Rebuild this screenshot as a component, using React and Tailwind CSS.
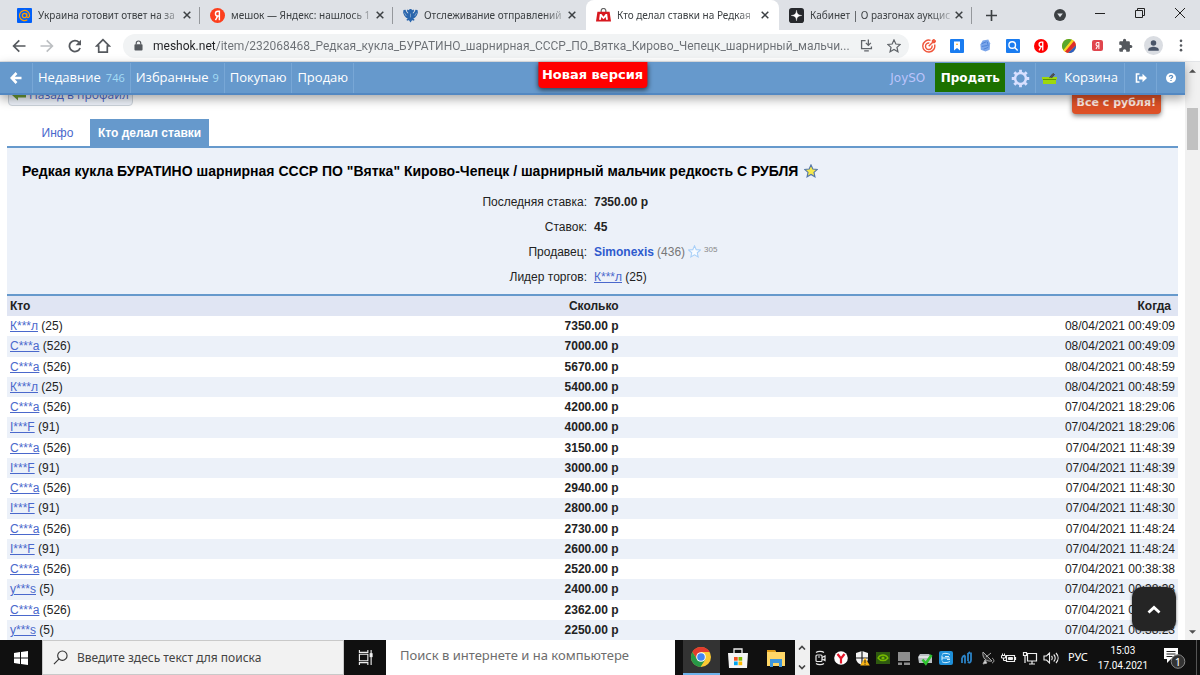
import { useState } from "react";

const tabs = [
  { icon: "mail", title: "Украина готовит ответ на за" },
  { icon: "yandex", title: "мешок — Яндекс: нашлось 1" },
  { icon: "post", title: "Отслеживание отправлений" },
  { icon: "meshok", title: "Кто делал ставки на Редкая", active: true },
  { icon: "cabinet", title: "Кабинет | О разгонах аукцис" },
];

const bids = [
  { who: "К***л", rating: 25, sum: "7350.00 р", date: "08/04/2021 00:49:09" },
  { who: "С***а", rating: 526, sum: "7000.00 р", date: "08/04/2021 00:49:09" },
  { who: "С***а", rating: 526, sum: "5670.00 р", date: "08/04/2021 00:48:59" },
  { who: "К***л", rating: 25, sum: "5400.00 р", date: "08/04/2021 00:48:59" },
  { who: "С***а", rating: 526, sum: "4200.00 р", date: "07/04/2021 18:29:06" },
  { who: "I***F", rating: 91, sum: "4000.00 р", date: "07/04/2021 18:29:06" },
  { who: "С***а", rating: 526, sum: "3150.00 р", date: "07/04/2021 11:48:39" },
  { who: "I***F", rating: 91, sum: "3000.00 р", date: "07/04/2021 11:48:39" },
  { who: "С***а", rating: 526, sum: "2940.00 р", date: "07/04/2021 11:48:30" },
  { who: "I***F", rating: 91, sum: "2800.00 р", date: "07/04/2021 11:48:30" },
  { who: "С***а", rating: 526, sum: "2730.00 р", date: "07/04/2021 11:48:24" },
  { who: "I***F", rating: 91, sum: "2600.00 р", date: "07/04/2021 11:48:24" },
  { who: "С***а", rating: 526, sum: "2520.00 р", date: "07/04/2021 00:38:38" },
  { who: "y***s", rating: 5, sum: "2400.00 р", date: "07/04/2021 00:38:38" },
  { who: "С***а", rating: 526, sum: "2362.00 р", date: "07/04/2021 00:38:23" },
  { who: "y***s", rating: 5, sum: "2250.00 р", date: "07/04/2021 00:38:23" },
];

const STAR = "M8 1l2.1 4.7 5.1.5-3.8 3.4 1.1 5L8 12l-4.5 2.6 1.1-5L.8 6.2l5.1-.5z";

function Favicon({ name }) {
  if (name === "mail")
    return (
      <svg viewBox="0 0 16 16" className="w-[15px] h-[15px] shrink-0">
        <rect width="16" height="16" rx="1" fill="#005ff9" />
        <circle cx="8" cy="8" r="2.3" fill="none" stroke="#ff9e00" strokeWidth="1.4" />
        <path d="M10.4 5.6v3.2c0 2.3 3 1.8 3-.9A5.4 5.4 0 1 0 11 12.500" fill="none" stroke="#ff9e00" strokeWidth="1.3" />
      </svg>
    );
  if (name === "yandex") return <YandexDot className="w-[15px] h-[15px] shrink-0" fill="#fc3f1d" />;
  if (name === "post")
    return (
      <svg viewBox="0 0 16 16" className="w-[15px] h-[15px] shrink-0" fill="#2a66ad">
        <path d="M7 1h2l.6 1.500 1.600-1 .8 1.600-1.500 1.700V6l2-2 .8-2.200L15.500 2l.4 3-1.200 3-2 2.400-1.700.5 1.500 2-1.700.6-1-.6L8 15.500 6.200 12.900l-1 .6-1.700-.6 1.500-2-1.700-.5-2-2.400L.1 5l.4-3 2.200-.2L3.500 4l2 2V4.800L4 3.100l.8-1.600 1.600 1z" />
        <path d="M8 6v4M1.500 5l2 3.500M14.500 5l-2 3.500" stroke="#b9c8dc" strokeWidth=".6" />
      </svg>
    );
  if (name === "meshok")
    return (
      <svg viewBox="0 0 16 16" className="w-[15px] h-[15px] shrink-0">
        <path d="M5.500 4.500V3a2.500 2.500 0 0 1 5 0v1.500" fill="none" stroke="#666" strokeWidth="1.300" />
        <path d="M1.500 4h13L16 14.500H0z" fill="#d8181f" />
        <path d="M3.300 12.500l.8-6h1.600L8 9.300l2.300-2.800h1.600l.8 6h-2l-.3-3L8 12l-2.400-2.500-.3 3z" fill="#fff" />
      </svg>
    );
  return (
    <svg viewBox="0 0 16 16" className="w-[15px] h-[15px] shrink-0">
      <rect width="16" height="16" rx="3" fill="#26282c" />
      <path d="M8 2.500c.4 3.700 1.500 5 5.500 5.500-4 .5-5.100 1.800-5.500 5.500C7.600 9.800 6.500 8.500 2.500 8 6.500 7.500 7.600 6.200 8 2.500z" fill="#fff" stroke="#fff" strokeWidth=".5" />
    </svg>
  );
}

function YandexDot({ className, fill, square }) {
  return (
    <svg viewBox="0 0 16 16" className={className}>
      <rect width="16" height="16" rx={square ? 3 : 8} fill={fill} />
      <path d="M10 13V3.500H8.500C6.800 3.500 5.800 4.500 5.800 6c0 1.700 1 2.600 2.500 2.600H10M8.200 8.600L5.800 13" fill="none" stroke="#fff" strokeWidth="1.500" />
    </svg>
  );
}

function TabStrip() {
  return (
    <div className="flex h-[30px] bg-[#dee1e6] pl-[7px] text-[#3c4043]">
      <div className="flex min-w-0 flex-1">
        {tabs.map((tab, i) => (
          <div
            key={tab.title}
            className={
              tab.active
                ? "flex w-[193px] min-w-0 items-center gap-[6px] rounded-t-lg bg-white pl-[10px] pr-2"
                : "flex w-[193px] min-w-0 items-center gap-[6px] pl-[10px] pr-2"
            }
          >
            <Favicon name={tab.icon} />
            <span className="-mr-[5px] min-w-0 flex-1 overflow-hidden whitespace-nowrap text-[10px] leading-4 [mask-image:linear-gradient(to_right,black_85%,rgba(0,0,0,0.2))]">
              {tab.title}
            </span>
            <button aria-label="Закрыть вкладку" className="flex h-3 w-3 shrink-0 items-center justify-center">
              <svg viewBox="0 0 8 8" className="h-2 w-2" stroke="#3c4043" strokeWidth="1.500">
                <path d="M.7.7l6.600 6.600M7.300.7L.7 7.300" />
              </svg>
            </button>
            {!tab.active && i !== 2 && <span className="-mr-2 h-[17px] w-px shrink-0 bg-[#95989c]" />}
          </div>
        ))}
        <button aria-label="Новая вкладка" className="flex w-[38px] items-center justify-center">
          <svg viewBox="0 0 12 12" className="h-[11px] w-[11px]" stroke="#3c4043" strokeWidth="1.800">
            <path d="M6 0v12M0 6h12" />
          </svg>
        </button>
      </div>
      <button aria-label="Поиск вкладок" className="flex w-10 items-center justify-center">
        <svg viewBox="0 0 12 12" className="h-3 w-3">
          <circle cx="6" cy="6" r="6" fill="#3c4043" />
          <path d="M3.200 4.500h5.600L6 8.300z" fill="#dee1e6" />
        </svg>
      </button>
      <button aria-label="Свернуть" className="flex h-[26px] w-10 items-center justify-center">
        <svg viewBox="0 0 10 10" className="h-[10px] w-[10px]" stroke="#222"><path d="M0 5.500h10" /></svg>
      </button>
      <button aria-label="Окно" className="flex h-[26px] w-10 items-center justify-center">
        <svg viewBox="0 0 10 10" className="h-[10px] w-[10px]" fill="none" stroke="#222">
          <path d="M.5 2.500h7v7h-7zM2.500 2.500v-2h7v7h-2" />
        </svg>
      </button>
      <button aria-label="Закрыть" className="flex h-[26px] w-10 items-center justify-center">
        <svg viewBox="0 0 10 10" className="h-[10px] w-[10px]" stroke="#222"><path d="M0 0l10 10M10 0L0 10" /></svg>
      </button>
    </div>
  );
}

function Toolbar() {
  const [url, setUrl] = useState(
    "meshok.net/item/232068468_Редкая_кукла_БУРАТИНО_шарнирная_СССР_ПО_Вятка_Кирово_Чепецк_шарнирный_мальчи..."
  );

  return (
    <div className="flex h-8 items-center border-b border-[#e3e5e8] bg-white pl-[5px] pr-[5px]">
      <button aria-label="Назад" className="flex w-7 justify-center">
        <svg viewBox="0 0 14 14" className="h-[14px] w-[14px]" fill="none" stroke="#55595e" strokeWidth="1.700">
          <path d="M13.500 7H2M7.300 1.300L1.600 7l5.700 5.700" />
        </svg>
      </button>
      <button aria-label="Вперёд" className="flex w-7 justify-center">
        <svg viewBox="0 0 14 14" className="h-[14px] w-[14px]" fill="none" stroke="#bcbfc2" strokeWidth="1.700">
          <path d="M.5 7H12M6.700 1.300L12.400 7l-5.700 5.700" />
        </svg>
      </button>
      <button aria-label="Обновить" className="flex w-7 justify-center">
        <svg viewBox="0 0 14 14" className="h-[14px] w-[14px]">
          <path d="M12.100 9A5.500 5.500 0 1 1 11 3.300" fill="none" stroke="#55595e" strokeWidth="1.800" />
          <path d="M13 .8v5.400H7.600z" fill="#55595e" />
        </svg>
      </button>
      <button aria-label="Домой" className="flex w-7 justify-center">
        <svg viewBox="0 0 16 16" className="h-[16px] w-[16px]" fill="none" stroke="#55595e" strokeWidth="1.700">
          <path d="M8 1.700L1.800 8h1.900v6.200h8.600V8h1.900z" />
        </svg>
      </button>
      <div className="ml-[6px] flex h-6 min-w-0 flex-1 items-center rounded-full bg-[#f1f3f4] pl-[11px] pr-px">
        <svg viewBox="0 0 10 12" className="h-[11px] w-[9px] shrink-0">
          <path d="M2.500 5V3.500a2.500 2.500 0 0 1 5 0V5" fill="none" stroke="#55595e" strokeWidth="1.300" />
          <rect x=".5" y="4.500" width="9" height="7" rx="1" fill="#55595e" />
        </svg>
        <input
          aria-label="Адресная строка"
          value={url}
          onChange={(e) => setUrl(e.target.value)}
          className="ml-[10px] min-w-0 flex-1 bg-[linear-gradient(90deg,#202124_62px,#6b6f74_62px)] bg-clip-text font-[Roboto,sans-serif] text-[12px] leading-5 text-transparent outline-none"
        />
        <button aria-label="Установить" className="flex w-7 justify-center">
          <svg viewBox="0 0 14 14" className="h-[13px] w-[13px]" fill="none" stroke="#5f6368" strokeWidth="1.400">
            <path d="M6 1.700H1.700v8.600h10.600V8M4.500 12.700h5M9 .5v6M6.300 4.200L9 6.900l2.700-2.700" />
          </svg>
        </button>
        <button aria-label="В закладки" className="flex w-7 justify-center">
          <svg viewBox="0 0 16 16" className="h-[14px] w-[14px]" fill="none" stroke="#5f6368" strokeWidth="1.400"><path d={STAR} /></svg>
        </button>
      </div>
      <div className="ml-[6px] flex shrink-0 items-center">
        <span className="flex w-7 justify-center">
          <svg viewBox="0 0 14 14" className="h-[14px] w-[14px]" fill="none" stroke="#f0553b" strokeWidth="1.400">
            <path d="M12.600 5.500A6 6 0 1 1 8.500 1.300M10 6.500A3.300 3.300 0 1 1 7.300 4M6.700 7.300L10.500 3.500M10.500 3.500V1.500l1.500-1v1.500h1.500l-1 1.500z" />
          </svg>
        </span>
        <span className="flex w-7 justify-center">
          <svg viewBox="0 0 14 14" className="h-[14px] w-[14px]">
            <rect width="14" height="14" rx="1" fill="#1a7cf0" />
            <path d="M4 2.500h6v9L7 9l-3 2.500z" fill="#fff" />
            <path d="M7 4l1 2H6z" fill="#f5a623" />
          </svg>
        </span>
        <span className="flex w-7 justify-center">
          <svg viewBox="0 0 14 14" className="h-[13px] w-[13px]">
            <path d="M4 1.500l6-1 2 4-.5 7L7 13.500l-5-2L1.500 6z" fill="#7ba6ea" />
            <path d="M3 5l5-2M3 8l6-1M5 11l5-2M9 3l1 5" stroke="#4a7fd6" fill="none" />
          </svg>
        </span>
        <span className="flex w-7 justify-center">
          <svg viewBox="0 0 14 14" className="h-[14px] w-[14px]" fill="none" stroke="#fff" strokeWidth="1.400">
            <rect width="14" height="14" rx="1" fill="#1a7cf0" stroke="none" />
            <circle cx="6.200" cy="6" r="3.300" />
            <path d="M8.700 8.500l3 3" />
          </svg>
        </span>
        <span className="flex w-7 justify-center"><YandexDot className="h-[14px] w-[14px]" fill="#f00" /></span>
        <span className="flex w-7 justify-center">
          <svg viewBox="0 0 14 14" className="h-[14px] w-[14px]">
            <circle cx="7" cy="7" r="7" fill="#f5c518" />
            <path d="M.3 9A7 7 0 0 1 7.500 0L10 .7 1.500 11.300z" fill="#58a82c" />
            <path d="M1.500 11.300L10 .7l2 1.400L3 12.700z" fill="#f9d423" />
            <path d="M3 12.700l9-10.600a7 7 0 0 1 2 4.500L6 14z" fill="#dd2c2c" />
            <path d="M6 14l8-7.400A7 7 0 0 1 6 14z" fill="#2c5fc4" />
          </svg>
        </span>
        <span className="flex w-7 justify-center"><YandexDot className="h-[11px] w-[11px]" fill="#e0454d" square /></span>
        <button aria-label="Расширения" className="flex w-7 justify-center">
          <svg viewBox="0 0 24 24" className="h-[15px] w-[15px]" fill="#55595e">
            <path d="M20.500 11H19V7c0-1.100-.9-2-2-2h-4V3.500a2.500 2.500 0 0 0-5 0V5H4c-1.100 0-2 .9-2 2v3.800h1.500c1.500 0 2.700 1.200 2.700 2.700S5 16.200 3.500 16.200H2V20c0 1.100.9 2 2 2h3.800v-1.500c0-1.500 1.200-2.700 2.700-2.700s2.700 1.200 2.700 2.700V22H17c1.100 0 2-.9 2-2v-4h1.500a2.500 2.500 0 0 0 0-5z" />
          </svg>
        </button>
        <button aria-label="Профиль" className="flex w-7 justify-center">
          <svg viewBox="0 0 20 20" className="h-[19px] w-[19px]">
            <circle cx="10" cy="10" r="10" fill="#dadde2" />
            <circle cx="10" cy="7.300" r="2.900" fill="#4a5568" />
            <path d="M4.500 15.500v-1.300c0-2 3.500-3 5.500-3s5.500 1 5.500 3v1.300z" fill="#4a5568" />
          </svg>
        </button>
        <button aria-label="Меню" className="flex w-7 justify-center">
          <svg viewBox="0 0 4 14" className="h-[13px] w-1" fill="#55595e">
            <circle cx="2" cy="2" r="1.400" /><circle cx="2" cy="7" r="1.400" /><circle cx="2" cy="12" r="1.400" />
          </svg>
        </button>
      </div>
    </div>
  );
}

function SiteNav() {
  return (
    <nav className="relative z-10 flex h-[33px] items-stretch border-b-2 border-[#5388c2] bg-[#6699cc] pt-px font-['Open_Sans','Noto_Sans',sans-serif] text-[13px] font-medium text-white shadow-[0_4px_10px_rgba(0,0,0,0.35)]">
      <a href="#back" aria-label="Назад" className="flex w-[33px] items-center justify-center border-r border-[#78a7d6]">
        <svg viewBox="0 0 12 12" className="h-3 w-3" fill="none" stroke="#fff" strokeWidth="2.600">
          <path d="M11.500 6H2M6.500 1L1.700 6l4.800 5" />
        </svg>
      </a>
      <a href="#recent" className="flex items-center gap-[5px] border-r border-[#78a7d6] px-[5px]">
        Недавние <span className="text-[11px] font-normal text-[#a5dcf5]">746</span>
      </a>
      <a href="#fav" className="flex items-center gap-1 border-r border-[#78a7d6] px-[5px]">
        Избранные <span className="text-[11px] font-normal text-[#a5dcf5]">9</span>
      </a>
      <a href="#buy" className="flex items-center border-r border-[#78a7d6] px-[5px]">Покупаю</a>
      <a href="#sell" className="flex items-center border-r border-[#78a7d6] px-[5px]">Продаю</a>
      <a
        href="#new"
        className="absolute left-1/2 top-0 flex h-[26px] -translate-x-1/2 items-center whitespace-nowrap rounded-b-sm bg-[#f00] px-1 font-['DejaVu_Sans',sans-serif] text-[13px] font-bold shadow-[0_2px_5px_rgba(0,0,0,0.6)]"
      >
        Новая версия
      </a>
      <div className="ml-auto flex items-stretch">
        <a href="#user" className="flex items-center px-[10px] font-['DejaVu_Sans',sans-serif] text-[12px] font-normal text-[#bcc4fb]">JoySO</a>
        <a href="#add" className="mb-px flex w-[70px] items-center justify-center bg-[#1c7100] font-['DejaVu_Sans',sans-serif] text-[12px] font-bold">Продать</a>
        <a href="#settings" aria-label="Настройки" className="flex w-[31px] items-center justify-center border-r border-[#78a7d6]">
          <svg viewBox="0 0 20 20" className="h-[19px] w-[19px]" fill="none" stroke="#d9e0ff">
            <circle cx="10" cy="10" r="5.700" strokeWidth="2.600" />
            <path d="M10 .8v3M10 16.200v3M.8 10h3M16.200 10h3M3.500 3.500l2.100 2.100M14.400 14.400l2.100 2.100M3.500 16.500l2.100-2.100M14.400 5.600l2.100-2.100" strokeWidth="3" />
          </svg>
        </a>
        <a href="#cart" className="flex items-center gap-[7px] border-r border-[#78a7d6] px-[6px]">
          <svg viewBox="0 0 15 14" className="h-[14px] w-[15px]">
            <path d="M0 6h15v2.500h-1V13H1V8.500H0z" fill="#9ed80c" />
            <path d="M1 8.500h13" stroke="#5f9300" />
            <path d="M7.500 6.500l3.500-4 1.500 1-3 3.500" fill="#555" stroke="#444" />
          </svg>
          Корзина
        </a>
        <a href="#exit" aria-label="Выход" className="flex w-[32px] items-center justify-center border-r border-[#78a7d6]">
          <svg viewBox="0 0 12 10" className="h-[10px] w-3">
            <path d="M4.500 1H1.500v8h3" fill="none" stroke="#fff" strokeWidth="1.600" />
            <path d="M4 3.500h3.500V.8L12 5 7.500 9.200V6.500H4z" fill="#fff" />
          </svg>
        </a>
        <a href="#help" aria-label="Помощь" className="flex w-[28px] items-center justify-center">
          <svg viewBox="0 0 10 10" className="h-[10px] w-[10px]">
            <circle cx="5" cy="5" r="5" fill="#fff" />
            <path d="M3.400 3.800C3.400 1.900 6.700 2 6.600 3.700 6.600 4.800 5 4.800 5 6M5 6.900v1.100" fill="none" stroke="#5b8dc0" strokeWidth="1.300" />
          </svg>
        </a>
      </div>
    </nav>
  );
}

function InfoRow({ label, children }) {
  return (
    <div className="grid h-[25px] grid-cols-2 items-center gap-x-[7px]">
      <dt className="text-right">{label}</dt>
      <dd>{children}</dd>
    </div>
  );
}

function BidPage() {
  return (
    <main className="flex min-h-0 flex-1 flex-col px-[7px] text-[12px] leading-4 text-[#222]">
      <div className="-mt-3 flex items-start justify-between pl-px pr-[17px]">
        <a href="#profile" className="flex h-[23px] items-center gap-[3px] whitespace-nowrap rounded-sm border border-[#ccd3da] bg-[#ecf1f9] px-[3px] font-['Open_Sans',sans-serif] text-[12px] text-[#4a68cc]">
          <svg viewBox="0 0 14 12" className="h-3 w-[14px]">
            <path d="M0 6l6-5.500v3h8v5H6v3z" fill="#6d9a35" />
          </svg>
          Назад в профайл
        </a>
        <a href="#ruble" className="mt-2 flex h-[23px] items-center rounded-sm bg-[#dd5127] px-[5px] font-['DejaVu_Sans',sans-serif] text-[11px] font-bold text-[#fde8e0] shadow-[0_2px_5px_rgba(0,0,0,0.5)]">
          Все с рубля!
        </a>
      </div>
      <div className="mt-[5px] flex h-[27px] items-stretch">
        <a href="#info" className="ml-[18px] flex w-[65px] items-center justify-center text-[#4a68cc]">Инфо</a>
        <a href="#bids" className="flex items-center bg-[#6699cc] px-2 font-bold text-white">Кто делал ставки</a>
      </div>
      <section className="border-t-2 border-[#6699cc] bg-[#ecf1f9] pb-[5px] pt-[14px]">
        <h1 className="flex items-center gap-[6px] pl-[15px] text-[14px] font-bold leading-[18px] text-black">
          Редкая кукла БУРАТИНО шарнирная СССР ПО "Вятка" Кирово-Чепецк / шарнирный мальчик редкость С РУБЛЯ
          <svg viewBox="0 0 16 16" className="h-[14px] w-[14px]" fill="#f6e94b" stroke="#5577a8" strokeWidth="1.300"><path d={STAR} /></svg>
        </h1>
        <dl className="mt-[9px] pr-1">
          <InfoRow label="Последняя ставка:"><b>7350.00 р</b></InfoRow>
          <InfoRow label="Ставок:"><b>45</b></InfoRow>
          <InfoRow label="Продавец:">
            <span className="flex items-center gap-[3px] text-[#777]">
              <a href="#seller" className="font-bold text-[#2f5bce]">Simonexis</a>
              (436)
              <svg viewBox="0 0 16 16" className="h-[13px] w-[13px]" fill="#f8fbff" stroke="#a9d0f8" strokeWidth="1.300"><path d={STAR} /></svg>
              <span className="pb-1 text-[8px] leading-3 text-[#888]">305</span>
            </span>
          </InfoRow>
          <InfoRow label="Лидер торгов:">
            <a href="#leader" className="text-[#4a68cc] underline">К***л</a> (25)
          </InfoRow>
        </dl>
      </section>
      <div className="min-h-0 flex-1 border-t-2 border-[#6699cc]">
        <table className="h-full w-full border-collapse">
          <thead>
            <tr className="h-5 bg-[#e0e5f3]">
              <th className="w-[40%] px-[3px] text-left">Кто</th>
              <th className="w-[13%] pr-[9px] text-right">Сколько</th>
              <th className="pr-[7px] text-right">Когда</th>
            </tr>
          </thead>
          <tbody>
            {bids.map((bid) => (
              <tr key={bid.sum} className="h-5 even:bg-[#ecf1f9]">
                <td className="px-[3px]">
                  <a href="#bidder" className="text-[#4a68cc] underline">{bid.who}</a> ({bid.rating})
                </td>
                <td className="pr-[9px] text-right font-bold">{bid.sum}</td>
                <td className="pr-[3px] text-right">{bid.date}</td>
              </tr>
            ))}
          </tbody>
        </table>
      </div>
    </main>
  );
}

function Scrollbar() {
  return (
    <div className="flex w-[15px] shrink-0 flex-col items-center bg-[#f1f1f1]">
      <svg viewBox="0 0 8 4" className="mt-[7px] h-1 w-[7px]" fill="#505050"><path d="M0 4h8L4 0z" /></svg>
      <div className="mt-[35px] h-[42px] w-[11px] bg-[#c1c1c1]" />
      <svg viewBox="0 0 8 4" className="mb-[6px] mt-auto h-1 w-[7px]" fill="#505050"><path d="M0 0h8L4 4z" /></svg>
    </div>
  );
}

function Tray() {
  return (
    <div className="flex items-center gap-[5px]">
      <svg viewBox="0 0 16 16" className="h-4 w-4" fill="none" stroke="#e8e8e8" strokeWidth="1.200">
        <path d="M4 2.500c2-1.500 6-1.500 8 0M4 13.500c2 1.500 6 1.500 8 0" />
        <rect x="4" y="5" width="6" height="6.500" rx="1" /><path d="M10 7.500l3-1.500v4.500L10 9M6 7h2" />
      </svg>
      <svg viewBox="0 0 16 16" className="h-4 w-4">
        <circle cx="8" cy="8" r="6.800" fill="#fff" />
        <path d="M4.500 4L8 8.500 11.500 4M8 8v5.500" fill="none" stroke="#e3172a" strokeWidth="2.200" />
      </svg>
      <svg viewBox="0 0 16 16" className="h-4 w-4">
        <path d="M8 1l6 2v5c0 4-3 6-6 7-3-1-6-3-6-7V3z" fill="#f4f4f4" />
        <path d="M8 1v14M2 8h12" stroke="#222" strokeWidth="1.200" />
        <path d="M11 7.500l4.800 8H6.200z" fill="#fbb616" />
        <path d="M11 10v3M11 13.700v1" stroke="#222" />
      </svg>
      <svg viewBox="0 0 16 16" className="h-4 w-4">
        <rect x="1" y="2" width="14" height="12" fill="#2f5a10" />
        <path d="M3 8c2.500-4 7.500-4 10 0-2.500 3.500-7.500 3.500-10 0z" fill="none" stroke="#76b900" strokeWidth="1.300" />
        <circle cx="8" cy="8" r="1.600" fill="#76b900" />
      </svg>
      <svg viewBox="0 0 16 16" className="h-4 w-4" fill="#8d8d8d">
        <rect x="2" y="2" width="12" height="9" /><path d="M2 12.500h4V15H2zM8 12.500h6V15H8z" />
      </svg>
      <svg viewBox="0 0 16 16" className="h-4 w-4">
        <path d="M3 4h9l3 3v6H2L1 7z" fill="#b9bec2" /><path d="M2 7h12" stroke="#eee" strokeWidth="1.500" />
        <path d="M5.500 9.500l3.300 4L14.500 5" fill="none" stroke="#2fc32f" strokeWidth="2.600" />
      </svg>
      <svg viewBox="0 0 16 16" className="h-4 w-4">
        <rect x="1" y="1" width="14" height="14" rx="2" fill="#1e8fd8" />
        <path d="M4 4.500c2-2 6-1 8 0M4 8h8M4 5.500v5M7 6.500h4M4 11.500c2 2 6 1 8 0M9 9.500h3" fill="none" stroke="#d7f1ff" />
      </svg>
      <svg viewBox="0 0 16 16" className="h-4 w-4" fill="none" stroke="#2c84c8" strokeWidth="1.800">
        <path d="M3 13V8M6 13.500V5.500M9 11V3M12 10V2.500M3 8c1-2 2-2.500 3-2.500M9 11.500c1 2 3 1 3-1.500M9 4l2-2" />
      </svg>
      <svg viewBox="0 0 16 16" className="h-4 w-4" stroke="#aaa">
        <path d="M3 2c-1 6 3 10 9 9z" fill="#333" /><path d="M6 7l5-4M3 14l4-1-2-3z" fill="#ddd" />
        <path d="M12 8c2 1 3 4 0 5" fill="none" />
      </svg>
      <svg viewBox="0 0 16 16" className="h-4 w-4" fill="none" stroke="#eee">
        <path d="M5.500 5.500h8v6h-8zM14.500 7v3" strokeWidth="1.200" />
        <path d="M7.500 7.500h4v2h-4z" fill="#eee" />
        <path d="M.5 5.500h4v2.500h-4zM1.500 3.500v2M3.500 3.500v2M2.500 8v2.500h3" />
      </svg>
      <svg viewBox="0 0 16 16" className="h-4 w-4" fill="none" stroke="#eee" strokeWidth="1.200">
        <path d="M5.500 3.500h9v7.500h-9zM10 11v3M7 14h6M1.500 2.500h3v3h-3zM3 5.500V13" />
      </svg>
      <svg viewBox="0 0 16 16" className="h-4 w-4" fill="none" stroke="#eee" strokeWidth="1.100">
        <path d="M1 6h2.500L6.500 3v10L3.500 10H1zM8.500 6c1 1 1 3 0 4M10.700 4.500c2 2 2 5 0 7M13 3c2.800 3 2.800 7 0 10" />
      </svg>
    </div>
  );
}

function Taskbar() {
  return (
    <footer className="flex h-[35px] shrink-0 items-stretch bg-[#101010] text-white">
      <button aria-label="Пуск" className="flex w-[42px] items-center justify-center">
        <svg viewBox="0 0 14 14" className="h-[14px] w-[14px]" fill="#fff">
          <path d="M0 2l6-.9v5.500H0zM7 1l7-1v6.600H7zM0 7.500h6V13l-6-.9zM7 7.500h7V14l-7-1z" />
        </svg>
      </button>
      <label className="flex w-[302px] items-center gap-[9px] border border-[#c9c9c9] bg-[#f2f2f2] pl-[10px]">
        <svg viewBox="0 0 16 16" className="h-[15px] w-[15px]" fill="none" stroke="#333" strokeWidth="1.200">
          <circle cx="10" cy="6" r="5" /><path d="M6.500 9.500L1 15" />
        </svg>
        <input aria-label="Поиск Windows" placeholder="Введите здесь текст для поиска" className="min-w-0 flex-1 text-[12px] outline-none placeholder:text-[#444]" />
      </label>
      <button aria-label="Представление задач" className="flex w-[42px] items-center justify-center">
        <svg viewBox="0 0 16 16" className="h-[15px] w-[15px]" fill="none" stroke="#eee" strokeWidth="1.200">
          <path d="M1.500 4.500h9v7h-9zM1.500 0v2.500h9V0M1.500 16v-2.500h9V16M14 0v16" />
          <rect x="13" y="4" width="2" height="3" fill="#fff" />
        </svg>
      </button>
      <input aria-label="Поиск в интернете" placeholder="Поиск в интернете и на компьютере" className="min-w-0 flex-1 bg-white px-[14px] pb-1 text-[13px] text-black outline-none placeholder:text-[#6d6d6d]" />
      <div className="flex pl-2">
        <button aria-label="Chrome" className="flex w-[37px] items-center justify-center border-b-2 border-[#6db2ea] bg-[#333]">
          <svg viewBox="0 0 20 20" className="h-5 w-5">
            <circle cx="10" cy="10" r="10" fill="#fbc934" />
            <path d="M1.340 5A10 10 0 0 1 18.660 5H10L6 12.300z" fill="#e33b2e" />
            <path d="M1.340 5A10 10 0 0 0 9.500 20L14.300 12.500 6 12.300z" fill="#279847" />
            <circle cx="10" cy="10" r="4.800" fill="#fff" /><circle cx="10" cy="10" r="3.800" fill="#4285f4" />
          </svg>
        </button>
        <button aria-label="Магазин" className="flex w-[37px] items-center justify-center">
          <svg viewBox="0 0 20 20" className="h-5 w-5">
            <path d="M6 5V1h8v4" fill="none" stroke="#eee" strokeWidth="1.300" />
            <path d="M0 5h20l-1 15H1z" fill="#f4f4f4" />
            <path d="M6 9h3.700v3.700H6z" fill="#f25022" /><path d="M10.500 9h3.700v3.700h-3.700z" fill="#7fba00" />
            <path d="M6 13.500h3.700v3.700H6z" fill="#00a4ef" /><path d="M10.500 13.500h3.700v3.700h-3.700z" fill="#ffb900" />
          </svg>
        </button>
        <button aria-label="Проводник" className="flex w-[38px] items-center justify-center">
          <svg viewBox="0 0 20 18" className="h-[18px] w-5">
            <path d="M1 1h8l1 2h9v14H1z" fill="#ffd767" /><path d="M1 1h8l1 2H1z" fill="#e09e1a" />
            <path d="M4 10h12v8h-3v-4H7v4H4z" fill="#3f97dc" />
          </svg>
        </button>
      </div>
      <div className="flex w-[15px] flex-col items-center justify-between bg-[#f0f0f0] py-[5px]">
        <svg viewBox="0 0 8 5" className="h-[5px] w-2" fill="none" stroke="#444" strokeWidth="1.600"><path d="M1 4.500l3-3 3 3" /></svg>
        <svg viewBox="0 0 8 5" className="h-[5px] w-2" fill="none" stroke="#444" strokeWidth="1.600"><path d="M1 .5l3 3 3-3" /></svg>
      </div>
      <div className="flex items-center pl-[2px]">
        <Tray />
        <span className="ml-[9px] text-[11px]">РУС</span>
        <div className="ml-[10px] text-center font-[Roboto,sans-serif] text-[10px] leading-[15px]">
          <div>15:03</div>
          <div>17.04.2021</div>
        </div>
        <button aria-label="Уведомления" className="ml-4 mr-[10px] w-[22px]">
          <svg viewBox="0 0 22 22" className="h-[22px] w-[22px]">
            <path d="M0 1h14v11H7l-4 4v-4H0z" fill="#fff" />
            <path d="M2.500 4.500h9M2.500 7h9M2.500 9.500h6" stroke="#222" />
            <circle cx="14" cy="14.500" r="6.800" fill="#333" stroke="#888" />
            <text x="14" y="18.500" fontSize="11" textAnchor="middle" fill="#fff">1</text>
          </svg>
        </button>
        <span className="mr-[3px] h-[35px] w-px bg-[#555]" />
      </div>
    </footer>
  );
}

export default function App() {
  return (
    <div className="flex h-screen flex-col overflow-hidden bg-white font-['Noto_Sans','Open_Sans',sans-serif]">
      <TabStrip />
      <Toolbar />
      <div className="flex min-h-0 flex-1 font-['Liberation_Sans',Arial,sans-serif]">
        <div className="relative flex min-w-0 flex-1 flex-col">
          <SiteNav />
          <BidPage />
          <button aria-label="Наверх" className="absolute bottom-[9px] right-[9px] flex h-11 w-11 items-center justify-center rounded-[10px] bg-[#252525] shadow-[0_0_3px_rgba(0,0,0,0.6)]">
            <svg viewBox="0 0 14 9" className="h-[9px] w-[14px]" fill="none" stroke="#fff" strokeWidth="2.800">
              <path d="M1.500 7.500L7 2.500l5.500 5" />
            </svg>
          </button>
        </div>
        <Scrollbar />
      </div>
      <Taskbar />
    </div>
  );
}
